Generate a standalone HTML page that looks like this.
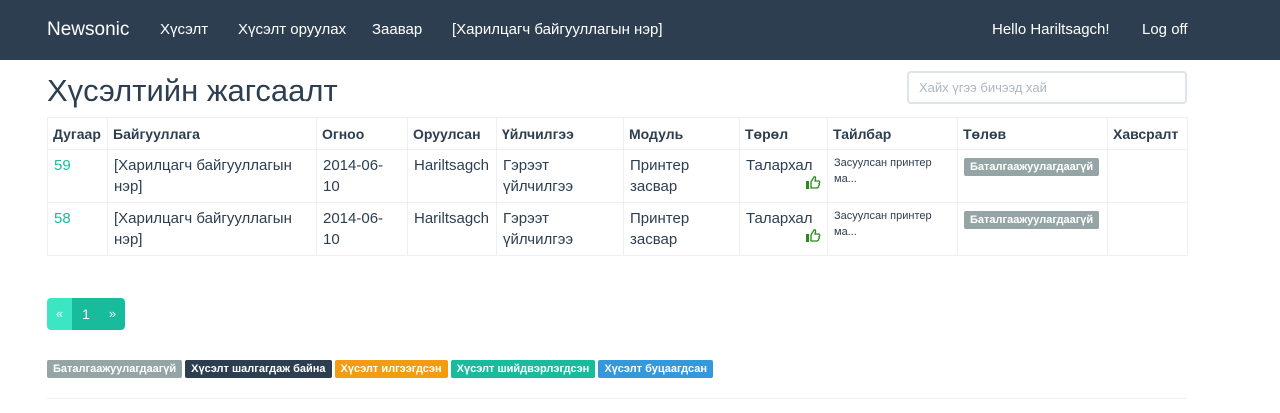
<!DOCTYPE html>
<html><head><meta charset="utf-8"><style>
*{box-sizing:border-box;margin:0;padding:0}
body{width:1280px;height:413px;background:#fff;font-family:"Liberation Sans",sans-serif;color:#2c3e50;position:relative;overflow:hidden}
.nav{position:absolute;left:0;top:0;width:1280px;height:60px;background:#2c3e50;color:#fff;font-size:15px}
.nav span{position:absolute;top:21px;white-space:nowrap}
h1{position:absolute;left:47px;top:73px;font-size:31px;font-weight:normal;white-space:nowrap}
.search{position:absolute;left:907px;top:71px;width:280px;height:33px;border:2px solid #dce4ec;border-radius:4px;font-size:13px;color:#acb6c0;padding:7px 10px}
table{position:absolute;left:47px;top:117px;border-collapse:collapse;font-size:15px;table-layout:fixed;width:1140px}
td,th{border:1px solid #ecf0f1;vertical-align:top;text-align:left;padding:5px 6px 4px 6px;line-height:21px;overflow:hidden}
th{font-size:14px;font-weight:bold;height:32px;padding:5px 6px 4px 5px;line-height:22px}
tr.r td{height:53px}
a{color:#18bc9c;text-decoration:none}
.lbl{display:inline-block;font-size:11px;font-weight:bold;color:#fff;padding:2px 6px;border-radius:2px;line-height:14px;white-space:nowrap}
.small{font-size:11px;line-height:16px}
.pg{position:absolute;left:47px;top:298px;height:32px;display:flex;border-radius:4px;overflow:hidden;color:#fff}
.pg div{background:#18bc9c;height:32px;line-height:32px;text-align:center;font-size:13px}
.lg{position:absolute;left:47px;top:360px;display:flex;gap:3px}
.hr{position:absolute;left:47px;top:398px;width:1140px;border-top:1px solid #ecf0f1}
.th{display:block;margin-left:auto;margin-top:-2px}
</style></head><body>
<div class="nav">
<span style="left:47px;top:19px;font-size:19px">Newsonic</span>
<span style="left:160px">Хүсэлт</span>
<span style="left:238px">Хүсэлт оруулах</span>
<span style="left:372px">Заавар</span>
<span style="left:452px">[Харилцагч байгууллагын нэр]</span>
<span style="left:992px">Hello Hariltsagch!</span>
<span style="left:1142px">Log off</span>
</div>
<h1>Хүсэлтийн жагсаалт</h1>
<div class="search">Хайх үгээ бичээд хай</div>
<table>
<colgroup><col style="width:60px"><col style="width:209px"><col style="width:91px"><col style="width:89px"><col style="width:127px"><col style="width:116px"><col style="width:88px"><col style="width:130px"><col style="width:150px"><col style="width:80px"></colgroup>
<tr><th>Дугаар</th><th>Байгууллага</th><th>Огноо</th><th>Оруулсан</th><th>Үйлчилгээ</th><th>Модуль</th><th>Төрөл</th><th>Тайлбар</th><th>Төлөв</th><th>Хавсралт</th></tr>
<tr class="r"><td><a>59</a></td><td>[Харилцагч байгууллагын нэр]</td><td>2014-06-<br>10</td><td>Hariltsagch</td><td>Гэрээт үйлчилгээ</td><td>Принтер засвар</td><td>Талархал<svg class="th" width="16" height="16" viewBox="0 0 16 16"><rect x="1" y="7" width="3" height="8" fill="#2a8a1a"/><path d="M6 8 L9 3 Q11 2 10.5 5 L10 7 H14 Q15.5 8 14 9.5 Q15 11 13.5 12 Q14 13.5 12 14 H6 Z" fill="none" stroke="#2a8a1a" stroke-width="1.3"/></svg></td><td class="small">Засуулсан принтер ма...</td><td><span class="lbl" style="background:#95a5a6">Баталгаажуулагдаагүй</span></td><td></td></tr>
<tr class="r"><td><a>58</a></td><td>[Харилцагч байгууллагын нэр]</td><td>2014-06-<br>10</td><td>Hariltsagch</td><td>Гэрээт үйлчилгээ</td><td>Принтер засвар</td><td>Талархал<svg class="th" width="16" height="16" viewBox="0 0 16 16"><rect x="1" y="7" width="3" height="8" fill="#2a8a1a"/><path d="M6 8 L9 3 Q11 2 10.5 5 L10 7 H14 Q15.5 8 14 9.5 Q15 11 13.5 12 Q14 13.5 12 14 H6 Z" fill="none" stroke="#2a8a1a" stroke-width="1.3"/></svg></td><td class="small">Засуулсан принтер ма...</td><td><span class="lbl" style="background:#95a5a6">Баталгаажуулагдаагүй</span></td><td></td></tr>
</table>
<div class="pg"><div style="width:25px;background:#3be6c4">«</div><div style="width:28px;font-size:14px">1</div><div style="width:25px">»</div></div>
<div class="lg">
<span class="lbl" style="background:#95a5a6">Баталгаажуулагдаагүй</span>
<span class="lbl" style="background:#2c3e50">Хүсэлт шалгагдаж байна</span>
<span class="lbl" style="background:#f39c12">Хүсэлт илгээгдсэн</span>
<span class="lbl" style="background:#18bc9c">Хүсэлт шийдвэрлэгдсэн</span>
<span class="lbl" style="background:#3498db">Хүсэлт буцаагдсан</span>
</div>
<div class="hr"></div>
</body></html>
